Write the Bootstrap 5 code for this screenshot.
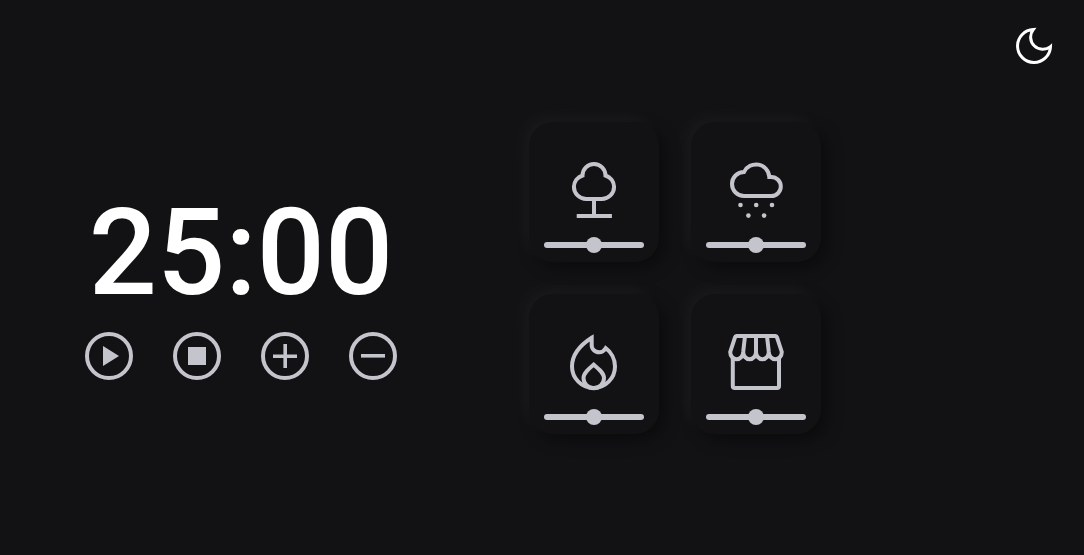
<!DOCTYPE html>
<html lang="en" data-bs-theme="dark">
<head>
<meta charset="utf-8">
<meta name="viewport" content="width=device-width, initial-scale=1">
<title>Focus Timer</title>
<link rel="stylesheet" href="https://cdn.jsdelivr.net/npm/bootstrap@5.3.0/dist/css/bootstrap.min.css">
<style>
  :root { --ink: #c4c4cc; --page: #121214; }
  body { background: var(--page); color: #fff; font-family: Roboto, sans-serif; }
  .icon-btn { background: none; border: 0; padding: 0; line-height: 0; color: var(--ink); }
  .theme-toggle { color: #fff; top: 26px; right: 30px; }
  .stage { padding: 32px 85px; column-gap: 132px; row-gap: 48px; }
  .clock { font-size: 120px; font-weight: 500; line-height: 157px; }
  .controls { gap: 40px; }
  .sounds { display: grid; grid-template-columns: repeat(2, 130px); gap: 32px; }
  .sound {
    padding: 36px 15px 9px; border-radius: 24px; color: var(--ink); background: var(--page);
    box-shadow: -6px -6px 16px rgba(255, 255, 255, .04), 6px 6px 16px rgba(0, 0, 0, .4);
  }
  .volume { appearance: none; -webkit-appearance: none; display: block; width: 100%; height: 16px; margin: 15px 0 0; background: none; }
  .volume::-webkit-slider-runnable-track { height: 6px; border-radius: 3px; background: var(--ink); }
  .volume::-webkit-slider-thumb { -webkit-appearance: none; width: 16px; height: 16px; margin-top: -5px; border-radius: 50%; background: var(--ink); }
  .volume::-moz-range-track { height: 6px; border-radius: 3px; background: var(--ink); }
  .volume::-moz-range-thumb { width: 16px; height: 16px; border: 0; border-radius: 50%; background: var(--ink); }
</style>
</head>
<body>
<button type="button" class="icon-btn theme-toggle position-absolute" aria-label="Toggle theme">
  <svg width="40" height="40" viewBox="0 0 40 40" fill="none" stroke="currentColor" stroke-width="3"><path d="M19.3 3.5A16.5 16.5 0 1 0 36.5 20.6A12.2 12.2 0 0 1 19.3 3.5z"/></svg>
</button>

<main class="stage min-vh-100 d-flex flex-wrap align-items-center align-content-center">
  <section class="text-center">
    <div class="clock" role="timer">25:00</div>
    <div class="controls d-flex justify-content-center">
      <button type="button" class="icon-btn" aria-label="Start">
        <svg width="48" height="48" viewBox="0 0 48 48"><circle cx="24" cy="24" r="22" fill="none" stroke="currentColor" stroke-width="4"/><path d="M18 14l16 10-16 10z" fill="currentColor"/></svg>
      </button>
      <button type="button" class="icon-btn" aria-label="Stop">
        <svg width="48" height="48" viewBox="0 0 48 48"><circle cx="24" cy="24" r="22" fill="none" stroke="currentColor" stroke-width="4"/><path d="M15 15h18v18H15z" fill="currentColor"/></svg>
      </button>
      <button type="button" class="icon-btn" aria-label="Add time">
        <svg width="48" height="48" viewBox="0 0 48 48" fill="none" stroke="currentColor"><circle cx="24" cy="24" r="22" stroke-width="4"/><path d="M12 24.2h24M24.2 12v24" stroke-width="3.6"/></svg>
      </button>
      <button type="button" class="icon-btn" aria-label="Remove time">
        <svg width="48" height="48" viewBox="0 0 48 48" fill="none" stroke="currentColor"><circle cx="24" cy="24" r="22" stroke-width="4"/><path d="M12 23.8h24" stroke-width="3.6"/></svg>
      </button>
    </div>
  </section>

  <section class="sounds">
    <div class="sound text-center">
      <button type="button" class="icon-btn" aria-label="Forest">
        <svg width="64" height="64" viewBox="0 0 64 64" fill="none" stroke="currentColor" stroke-width="4"><path d="M20.5 17.5A11.5 11.5 0 0 1 43.5 17.5A12.3 12.3 0 0 1 52.1 28.8A12.3 12.3 0 0 1 39.8 41H24.2A12.3 12.3 0 0 1 11.9 28.8A12.3 12.3 0 0 1 20.5 17.5zM32 41v17M14.7 58h35.2"/></svg>
      </button>
      <input type="range" class="volume" aria-label="Forest volume">
    </div>
    <div class="sound text-center">
      <button type="button" class="icon-btn" aria-label="Rain">
        <svg width="64" height="64" viewBox="0 0 64 64"><path d="M20 14A13.3 13.3 0 0 1 45.3 19H47.3A9.5 9.5 0 0 1 47.3 38H20A12 12 0 0 1 20 14z" fill="none" stroke="currentColor" stroke-width="4"/><g fill="currentColor"><circle cx="16.5" cy="47" r="2.3"/><circle cx="32.2" cy="47" r="2.3"/><circle cx="48" cy="47" r="2.3"/><circle cx="24.4" cy="57.6" r="2.3"/><circle cx="40.1" cy="57.6" r="2.3"/></g></svg>
      </button>
      <input type="range" class="volume" aria-label="Rain volume">
    </div>
    <div class="sound text-center">
      <button type="button" class="icon-btn" aria-label="Fireplace">
        <svg width="64" height="64" viewBox="0 0 64 64" fill="none" stroke="currentColor" stroke-width="4"><path d="M29.7 7.8C20 14 10 24 10 36.5A21.5 21.5 0 0 0 53 36.5C53 29 49 22 43.7 18.2C42 21 40 22.3 37.2 22.3C32.5 22.3 29.2 18.5 29.7 14z"/><path d="M31.7 34.6C27 38.5 21.5 43 21.5 48A10.2 10.2 0 0 0 42 48C42 43 36.4 38.5 31.7 34.6z"/></svg>
      </button>
      <input type="range" class="volume" aria-label="Fireplace volume">
    </div>
    <div class="sound text-center">
      <button type="button" class="icon-btn" aria-label="Coffee shop">
        <svg width="64" height="64" viewBox="0 0 64 64" fill="none" stroke="currentColor" stroke-width="4" stroke-linejoin="round"><path d="M8.8 28V56Q8.8 58 10.8 58H53Q55 58 55 56V28"/><path d="M12.5 6H51.5Q52.6 6 53 7.3L57.8 22A6.5 7.3 0 0 1 44.8 22A6.4 7.3 0 0 1 32 22A6.4 7.3 0 0 1 19.2 22A6.5 7.3 0 0 1 6.2 22L11 7.3Q11.4 6 12.5 6zM21 6L19.2 22M32 6V22M43 6L44.8 22"/></svg>
      </button>
      <input type="range" class="volume" aria-label="Coffee shop volume">
    </div>
  </section>
</main>
<script src="https://cdn.jsdelivr.net/npm/bootstrap@5.3.0/dist/js/bootstrap.bundle.min.js"></script>
</body>
</html>
